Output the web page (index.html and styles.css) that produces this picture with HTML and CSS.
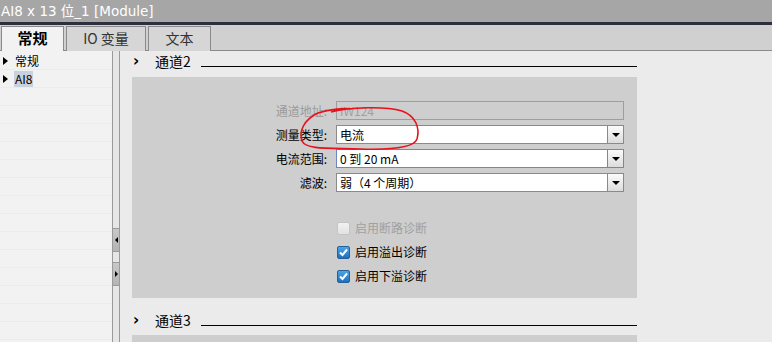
FILE: index.html
```html
<!DOCTYPE html>
<html>
<head>
<meta charset="utf-8">
<link rel="stylesheet" href="styles.css">
</head>
<body>
<div class="title">AI8 x 13 位_1 [Module]</div>
<div class="sep"></div>
<div class="tabs">
  <div class="tab active">常规</div>
  <div class="tab">IO 变量</div>
  <div class="tab">文本</div>
</div>
<div class="main">
  <div class="left">
    <div class="tree-row"><span class="tri"></span><span class="tlabel">常规</span></div>
    <div class="tree-row"><span class="tri"></span><span class="tlabel sel">AI8</span></div>
    <div class="tree-row"></div>
    <div class="tree-row"></div>
    <div class="tree-row"></div>
    <div class="tree-row"></div>
    <div class="tree-row"></div>
    <div class="tree-row"></div>
    <div class="tree-row"></div>
    <div class="tree-row"></div>
    <div class="tree-row"></div>
    <div class="tree-row"></div>
    <div class="tree-row"></div>
    <div class="tree-row"></div>
    <div class="tree-row"></div>
    <div class="tree-row"></div>
    <div class="tree-row"></div>
  </div>
  <div class="splitter">
    <div class="split-btn"><span class="arr-l"></span></div>
    <div class="split-btn second"><span class="arr-r"></span></div>
  </div>
  <div class="right">
    <div class="sec-head"><span class="chev">&#x203A;</span><span class="sec-title">通道2</span><span class="sec-line"></span></div>
    <div class="panel">
      <div class="form">
        <div class="lbl dis">通道地址:</div>
        <div class="field disabled">IW124</div>
        <div class="lbl">测量类型:</div>
        <div class="field select"><span class="val">电流</span><span class="dd"></span></div>
        <div class="lbl">电流范围:</div>
        <div class="field select focus"><span class="val">0 到 20 mA</span><span class="dd"></span></div>
        <div class="lbl">滤波:</div>
        <div class="field select"><span class="val">弱（4 个周期）</span><span class="dd"></span></div>
      </div>
      <div class="checks">
        <div class="chk dis"><span class="box"></span>启用断路诊断</div>
        <div class="chk"><span class="box on"><svg viewBox="0 0 13 13" width="13" height="13"><path d="M3 6.5 L5.5 9 L10 3.5" fill="none" stroke="#fff" stroke-width="2"/></svg></span>启用溢出诊断</div>
        <div class="chk"><span class="box on"><svg viewBox="0 0 13 13" width="13" height="13"><path d="M3 6.5 L5.5 9 L10 3.5" fill="none" stroke="#fff" stroke-width="2"/></svg></span>启用下溢诊断</div>
      </div>
    </div>
    <div class="sec-head sec3"><span class="chev">&#x203A;</span><span class="sec-title">通道3</span><span class="sec-line"></span></div>
    <div class="panel short"></div>
  </div>
</div>
<svg class="annot" width="772" height="342" viewBox="0 0 772 342">
  <path d="M331 112 C 350 107, 385 106, 402 111 C 416 116, 420 128, 417 139 C 414 148, 392 150, 360 149 C 330 148, 306 150, 302 141 C 299 132, 303 120, 318 113 C 330 109, 345 108, 352 109" fill="none" stroke="#e8101a" stroke-width="1.6"/>
</svg>
</body>
</html>
```

FILE: styles.css
```css
* { box-sizing: border-box; }
html, body { margin: 0; padding: 0; }
body {
  width: 772px;
  height: 342px;
  overflow: hidden;
  background: #ebebeb;
  font-family: "Noto Sans CJK SC", "DejaVu Sans", sans-serif;
  font-size: 12px;
  color: #000;
  position: relative;
}
.title {
  height: 22px;
  background: #a6a6a6;
  color: #fff;
  font-family: "DejaVu Sans", "Noto Sans CJK SC", sans-serif;
  font-size: 13.5px;
  line-height: 22px;
  padding-left: 1px;
  white-space: nowrap;
}
.sep { height: 3px; background: #2e2f3c; }
.tabs {
  height: 26px;
  background: #d0d0d0;
  display: flex;
  align-items: flex-end;
  gap: 2px;
  padding-left: 1px;
  border-bottom: 1px solid #8a8a8a;
}
.tab {
  height: 25px;
  border: 1px solid #8a8a8a;
  border-bottom: none;
  background: #d6d6d6;
  font-size: 14px;
  line-height: 22px;
  text-align: center;
  color: #333;
  margin-bottom: -1px;
}
.tab:nth-child(1) { width: 63px; }
.tab:nth-child(2) { width: 80px; }
.tab:nth-child(3) { width: 63px; }
.tab.active {
  background: #f2f2f2;
  font-weight: bold;
  color: #000;
  font-size: 15px;
}
.main {
  display: flex;
  height: 291px;
}
.left {
  width: 112px;
  background: #f2f2f2;
  display: flex;
  flex-direction: column;
  padding-top: 1px;
}
.tree-row {
  height: 18px;
  border-bottom: 1px solid #ebebeb;
  display: flex;
  align-items: center;
  flex: none;
}
.tri {
  width: 0; height: 0;
  border-top: 4px solid transparent;
  border-bottom: 4px solid transparent;
  border-left: 5px solid #000;
  margin-left: 3px;
  margin-right: 6px;
}
.tlabel { padding: 0 1px; line-height: 16px; }
.tlabel.sel { background: #c9d1dc; }
.splitter {
  width: 8px;
  background: #e6e6e6;
  border-left: 1px solid #9a9a9a;
  border-right: 1px solid #9a9a9a;
  display: flex;
  flex-direction: column;
  padding-top: 177px;
}
.split-btn {
  height: 24px;
  flex: none;
  background: linear-gradient(#c8c8c8, #b4b4b4);
  border-top: 1px solid #9a9a9a;
  border-bottom: 1px solid #9a9a9a;
  display: flex;
  align-items: center;
  justify-content: center;
}
.split-btn.second { margin-top: 10px; }
.arr-l {
  width: 0; height: 0;
  border-top: 3px solid transparent;
  border-bottom: 3px solid transparent;
  border-right: 3px solid #000;
}
.arr-r {
  width: 0; height: 0;
  border-top: 3px solid transparent;
  border-bottom: 3px solid transparent;
  border-left: 3px solid #000;
}
.right {
  flex: 1;
  padding-left: 12px;
  display: flex;
  flex-direction: column;
}
.right > * { flex: none; }
.sec-head {
  height: 26px;
  display: flex;
  align-items: flex-start;
  padding-top: 1px;
  width: 505px;
}
.chev {
  width: 23px;
  font-size: 15px;
  font-weight: bold;
  line-height: 18px;
  padding-left: 1px;
  font-family: "DejaVu Sans", sans-serif;
}
.sec-title { font-size: 14px; line-height: 18px; }
.sec-line {
  flex: 1;
  margin-left: 10px;
  margin-top: 14px;
  border-top: 1px solid #000;
}
.sec3 { margin-top: 12px; height: 25px; }
.panel {
  width: 505px;
  height: 221px;
  background: #cecece;
  padding: 24px 13px 0 0;
}
.panel.short { height: 20px; padding: 0; }
.form {
  display: grid;
  grid-template-columns: 195px 288px;
  column-gap: 9px;
  row-gap: 5px;
}
.lbl {
  text-align: right;
  line-height: 19px;
  height: 19px;
}
.lbl.dis { color: #9b9b9b; }
.field {
  height: 19px;
  border: 1px solid #8a8a8a;
  background: #fff;
  line-height: 17px;
  padding-left: 3px;
  display: flex;
}
.field.disabled {
  background: #cecece;
  color: #a0a0a0;
  border-color: #9e9e9e;
}
.field.focus { border-color: #6e86c8; }
.val { flex: 1; white-space: nowrap; }
.dd {
  width: 17px;
  margin-top: -1px;
  margin-bottom: -1px;
  margin-right: -1px;
  border: 1px solid #8a8a8a;
  background: linear-gradient(#fbfbfb, #dcdcdc);
  position: relative;
}
.field.focus .dd { border-color: #6e86c8; }
.dd::after {
  content: "";
  position: absolute;
  left: 4px;
  top: 7px;
  border-left: 4px solid transparent;
  border-right: 4px solid transparent;
  border-top: 4px solid #000;
}
.checks {
  margin-left: 205px;
  margin-top: 29px;
  display: flex;
  flex-direction: column;
  gap: 10px;
}
.chk {
  display: flex;
  align-items: center;
  height: 14px;
  line-height: 14px;
}
.chk.dis { color: #a0a0a0; }
.box {
  width: 13px;
  height: 13px;
  margin-right: 5px;
  border: 1px solid #c4c4c4;
  background: linear-gradient(#f2f2f2, #e2e2e2);
  border-radius: 2px;
  display: flex;
}
.box.on {
  background: linear-gradient(#4aa6e6, #1f6fbd);
  border-color: #2a5f95;
}
.box svg { margin: -1px; }
.annot {
  position: absolute;
  left: 0;
  top: 0;
  pointer-events: none;
}
```
